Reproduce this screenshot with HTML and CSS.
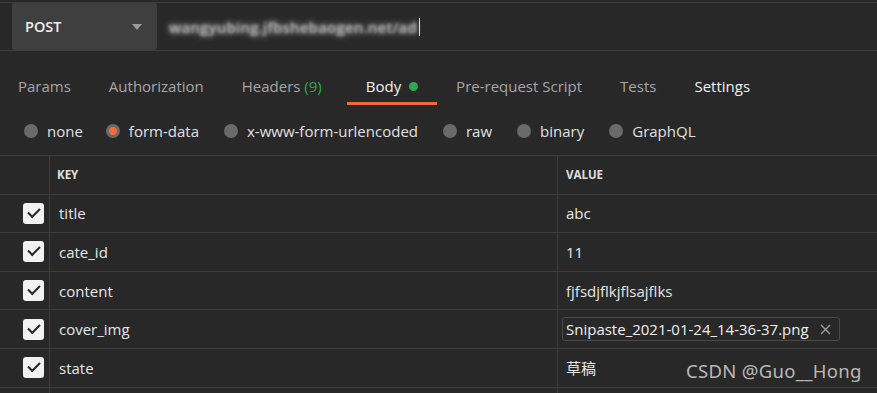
FILE: index.html
```html
<!DOCTYPE html>
<html lang="en">
<head>
  <meta charset="UTF-8" />
  <title>Request - Body</title>
  <link rel="stylesheet" href="styles.css">
</head>
<body>

<!-- URL bar -->
<div class="urlbar">
  <div class="method">
    <span>POST</span>
    <span class="caret"></span>
  </div>
  <div class="url"><span class="blur">wangyubing.jfbshebaogen.net/ad</span><span class="cursor"></span></div>
</div>

<!-- Tabs -->
<div class="tabs">
  <div class="tab">Params</div>
  <div class="tab">Authorization</div>
  <div class="tab">Headers <span class="count">(9)</span></div>
  <div class="tab active">Body <span class="dot"></span></div>
  <div class="tab">Pre-request Script</div>
  <div class="tab">Tests</div>
  <div class="tab light">Settings</div>
</div>

<!-- Body types -->
<div class="types">
  <label class="type"><span class="radio"></span>none</label>
  <label class="type"><span class="radio on"></span>form-data</label>
  <label class="type"><span class="radio"></span>x-www-form-urlencoded</label>
  <label class="type"><span class="radio"></span>raw</label>
  <label class="type"><span class="radio"></span>binary</label>
  <label class="type"><span class="radio"></span>GraphQL</label>
</div>

<!-- Form data table -->
<div class="table">
  <div class="row head">
    <div class="cell check"></div>
    <div class="cell key">KEY</div>
    <div class="cell value">VALUE</div>
  </div>
  <div class="row">
    <div class="cell check"><span class="box"></span></div>
    <div class="cell key">title</div>
    <div class="cell value">abc</div>
  </div>
  <div class="row">
    <div class="cell check"><span class="box"></span></div>
    <div class="cell key">cate_id</div>
    <div class="cell value">11</div>
  </div>
  <div class="row">
    <div class="cell check"><span class="box"></span></div>
    <div class="cell key">content</div>
    <div class="cell value">fjfsdjflkjflsajflks</div>
  </div>
  <div class="row">
    <div class="cell check"><span class="box"></span></div>
    <div class="cell key">cover_img</div>
    <div class="cell value">
      <span class="file">Snipaste_2021-01-24_14-36-37.png
        <svg class="remove" width="11" height="11" viewBox="0 0 11 11"><path d="M1 1L10 10M10 1L1 10" stroke="#a0a0a0" stroke-width="1.4"/></svg>
      </span>
    </div>
  </div>
  <div class="row">
    <div class="cell check"><span class="box"></span></div>
    <div class="cell key">state</div>
    <div class="cell value cjk">草稿</div>
  </div>
  <div class="row last">
    <div class="cell check"></div>
    <div class="cell key"></div>
    <div class="cell value"></div>
  </div>
</div>

<div class="watermark">CSDN @Guo__Hong</div>

</body>
</html>
```

FILE: styles.css
```css
* {
  box-sizing: border-box;
}
body {
  margin: 0;
  padding: 0;
  background: #282828;
  color: #e6e6e6;
  font-family: "Open Sans", "Noto Sans", sans-serif;
  font-size: 15px;
  width: 877px;
  height: 393px;
  overflow: hidden;
  position: relative;
}
.urlbar {
  display: flex;
  height: 49px;
  margin-top: 2px;
  border-top: 1px solid #3c3c3c;
  border-bottom: 1px solid #3c3c3c;
}
.method {
  width: 145px;
  margin-left: 12px;
  height: 47px;
  padding: 0 13px;
  background: #3f3f3f;
  border-radius: 3px;
  display: flex;
  align-items: center;
  justify-content: space-between;
  font-weight: 600;
  color: #f0f0f0;
  font-size: 14.5px;
}
.caret {
  width: 0;
  height: 0;
  border-left: 5px solid transparent;
  border-right: 5px solid transparent;
  border-top: 6px solid #9a9a9a;
  margin-right: 2px;
}
.url {
  flex: 1;
  display: flex;
  align-items: center;
  padding-left: 12px;
  background: #282828;
  border-radius: 3px 0 0 3px;
}
/* url is pixelated in the source, so keep it unreadable */
.blur {
  color: transparent;
  text-shadow: 0 0 6px #d0d0d0, 0 0 3px #909090;
  font-size: 15px;
  font-weight: 600;
  letter-spacing: 0.2px;
}
.cursor {
  width: 1px;
  height: 18px;
  background: #e0e0e0;
  margin-left: 2px;
}
.tabs {
  display: flex;
  height: 54px;
  margin-left: -1px;
}
.tab {
  padding: 25px 19px 0;
  height: 54px;
  display: flex;
  align-items: flex-start;
  color: #a6a6a6;
  border-bottom: 3px solid transparent;
  white-space: pre;
}
.tab.active {
  color: #f0f0f0;
  border-bottom-color: #f26b3a;
}
.tab.light {
  color: #f0f0f0;
}
.count {
  color: #2fa84f;
  margin-right: 6px;
}
.dot {
  width: 9px;
  height: 9px;
  border-radius: 50%;
  background: #2fa84f;
  margin-left: 4px;
  margin-top: 6px;
}
.types {
  display: flex;
  align-items: center;
  height: 51px;
  padding-left: 24px;
  padding-top: 1px;
  border-bottom: 1px solid #3c3c3c;
}
.type {
  display: flex;
  align-items: center;
  color: #e0e0e0;
  margin-right: 25px;
}
.type:first-child {
  margin-right: 23px;
}
.radio {
  width: 14px;
  height: 14px;
  border-radius: 50%;
  background: #6a6a6a;
  margin-right: 9px;
  display: flex;
  align-items: center;
  justify-content: center;
}
.radio.on::after {
  content: "";
  width: 8px;
  height: 8px;
  border-radius: 50%;
  background: #f26b3a;
}
.row {
  display: flex;
  height: 38.6px;
  border-bottom: 1px solid #3c3c3c;
}
.row.last {
  height: 10px;
  border-bottom: none;
}
.cell {
  display: flex;
  align-items: center;
  color: #e6e6e6;
}
.check {
  width: 50px;
  border-right: 1px solid #3c3c3c;
  justify-content: flex-end;
  padding-right: 5px;
}
.key {
  width: 508px;
  padding-left: 9px;
  border-right: 1px solid #3c3c3c;
}
.value {
  flex: 1;
  padding-left: 8px;
}
.head .cell {
  font-size: 11.5px;
  font-weight: 700;
  color: #e0e0e0;
}
.head .key {
  padding-left: 7px;
}
.box {
  width: 21px;
  height: 21px;
  border-radius: 3px;
  background: #f2f2f2;
  position: relative;
}
.box::after {
  content: "";
  position: absolute;
  left: 5px;
  top: 5px;
  width: 10px;
  height: 5px;
  border-left: 2.5px solid #262626;
  border-bottom: 2.5px solid #262626;
  transform: rotate(-45deg);
}
.file {
  margin-left: -4px;
  border: 1px solid #4a4a4a;
  border-radius: 3px;
  padding: 1px 8px 1px 3px;
  color: #f0f0f0;
  display: flex;
  align-items: center;
}
.remove {
  margin-left: 11px;
}
.cjk {
  font-family: "Noto Sans CJK SC", sans-serif;
}
.watermark {
  position: absolute;
  left: 686px;
  top: 358px;
  font-family: "Noto Sans", "Open Sans", sans-serif;
  font-size: 18.5px;
  color: #b8b8b8;
  letter-spacing: 0.3px;
}
```
